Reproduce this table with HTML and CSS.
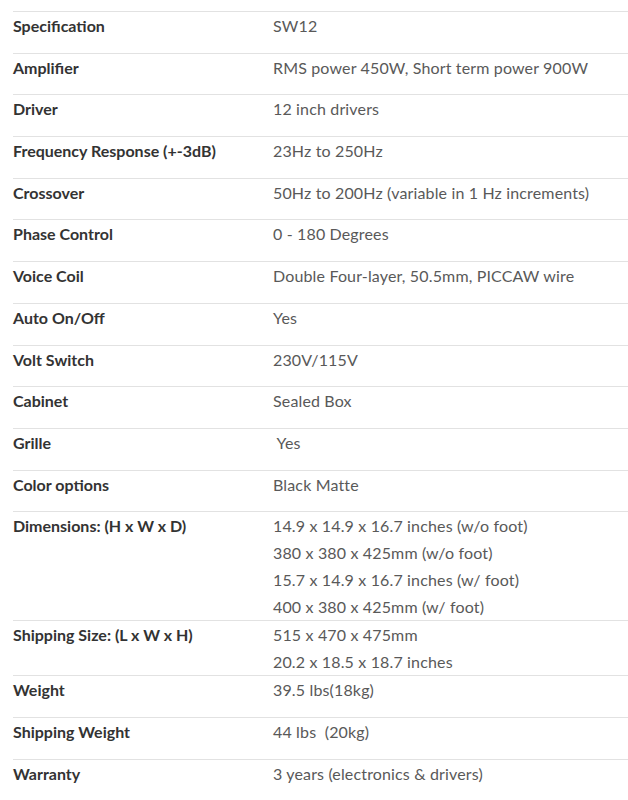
FILE: index.html
```html
<!DOCTYPE html>
<html>
<head>
<meta charset="utf-8">
<link rel="stylesheet" href="styles.css">
</head>
<body>
<div class="specs">
  <div class="row"><div class="label">Specification</div><div class="value">SW12</div></div>
  <div class="row"><div class="label">Amplifier</div><div class="value">RMS power 450W, Short term power 900W</div></div>
  <div class="row"><div class="label">Driver</div><div class="value">12 inch drivers</div></div>
  <div class="row"><div class="label">Frequency Response (+-3dB)</div><div class="value">23Hz to 250Hz</div></div>
  <div class="row"><div class="label">Crossover</div><div class="value">50Hz to 200Hz (variable in 1 Hz increments)</div></div>
  <div class="row"><div class="label">Phase Control</div><div class="value">0 - 180 Degrees</div></div>
  <div class="row"><div class="label">Voice Coil</div><div class="value">Double Four-layer, 50.5mm, PICCAW wire</div></div>
  <div class="row"><div class="label">Auto On/Off</div><div class="value">Yes</div></div>
  <div class="row"><div class="label">Volt Switch</div><div class="value">230V/115V</div></div>
  <div class="row"><div class="label">Cabinet</div><div class="value">Sealed Box</div></div>
  <div class="row"><div class="label">Grille</div><div class="value">&nbsp;Yes</div></div>
  <div class="row"><div class="label">Color options</div><div class="value">Black Matte</div></div>
  <div class="row"><div class="label">Dimensions: (H x W x D)</div><div class="value multi">14.9 x 14.9 x 16.7 inches (w/o foot)<br>380 x 380 x 425mm (w/o foot)<br>15.7 x 14.9 x 16.7 inches (w/ foot)<br>400 x 380 x 425mm (w/ foot)</div></div>
  <div class="row"><div class="label">Shipping Size: (L x W x H)</div><div class="value multi">515 x 470 x 475mm<br>20.2 x 18.5 x 18.7 inches</div></div>
  <div class="row"><div class="label">Weight</div><div class="value">39.5 lbs(18kg)</div></div>
  <div class="row"><div class="label">Shipping Weight</div><div class="value">44 lbs&nbsp; (20kg)</div></div>
  <div class="row"><div class="label">Warranty</div><div class="value">3 years (electronics &amp; drivers)</div></div>
</div>
</body>
</html>
```
FILE: styles.css
```css
html, body {
  margin: 0;
  padding: 0;
  background: #fff;
}
body {
  font-family: Lato, "Open Sans", sans-serif;
  font-size: 16px;
}
.specs {
  margin: 11px 0 0 13px;
}
.row {
  display: grid;
  grid-template-columns: 260px 1fr;
  border-top: 1px solid #e2e2e2;
  line-height: 27.3px;
}
.label {
  font-weight: bold;
  color: #333;
  padding-bottom: 13.4px;
}
.value {
  color: #595959;
  letter-spacing: 0.15px;
}
.value.multi {
  line-height: 27px;
}
```
